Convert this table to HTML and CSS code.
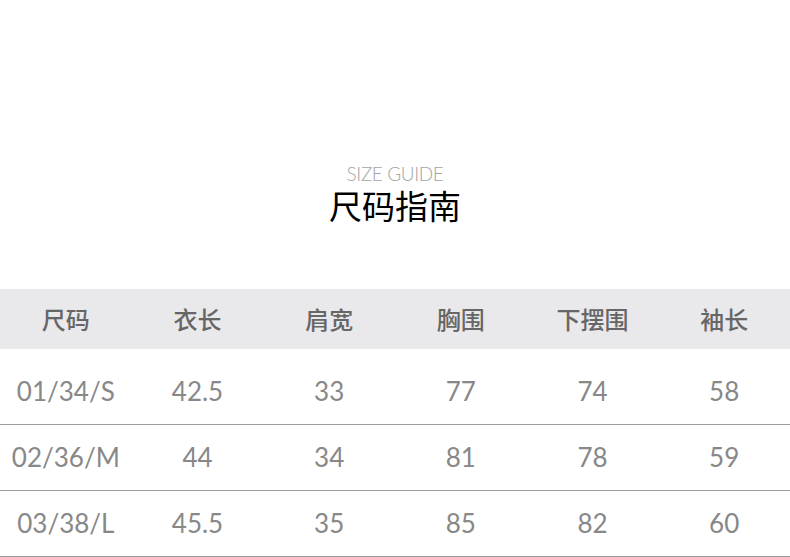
FILE: index.html
```html
<!DOCTYPE html>
<html lang="zh">
<head>
<meta charset="utf-8">
<title>尺码指南</title>
<link rel="stylesheet" href="styles.css">
</head>
<body>
<div class="page">
  <header class="heading">
    <div class="sub">SIZE GUIDE</div>
    <h1 class="title">尺码指南</h1>
  </header>
  <div class="table">
    <div class="row head">
      <div class="cell">尺码</div>
      <div class="cell">衣长</div>
      <div class="cell">肩宽</div>
      <div class="cell">胸围</div>
      <div class="cell">下摆围</div>
      <div class="cell">袖长</div>
    </div>
    <div class="body">
      <div class="row data">
        <div class="cell">01/34/S</div>
        <div class="cell">42.5</div>
        <div class="cell">33</div>
        <div class="cell">77</div>
        <div class="cell">74</div>
        <div class="cell">58</div>
      </div>
      <div class="row data">
        <div class="cell">02/36/M</div>
        <div class="cell">44</div>
        <div class="cell">34</div>
        <div class="cell">81</div>
        <div class="cell">78</div>
        <div class="cell">59</div>
      </div>
      <div class="row data">
        <div class="cell">03/38/L</div>
        <div class="cell">45.5</div>
        <div class="cell">35</div>
        <div class="cell">85</div>
        <div class="cell">82</div>
        <div class="cell">60</div>
      </div>
    </div>
  </div>
</div>
</body>
</html>
```
FILE: styles.css
```css
html, body {
  margin: 0;
  padding: 0;
  background: #ffffff;
}
.page {
  width: 790px;
  padding-top: 164px;
  font-family: "Lato", "Noto Sans CJK SC", sans-serif;
}
.heading {
  display: flex;
  flex-direction: column;
  align-items: center;
}
.sub {
  font-size: 19px;
  line-height: 20px;
  color: #a4a4a4;
  font-weight: 300;
  letter-spacing: -0.4px;
}
.title {
  margin: 2px 0 0;
  font-size: 33px;
  line-height: 40px;
  font-weight: 400;
  color: #000;
  font-family: "Lato", "Noto Sans CJK SC", sans-serif;
}
.table {
  margin-top: 63px;
}
.row {
  display: grid;
  grid-template-columns: repeat(6, 1fr);
}
.cell {
  display: flex;
  align-items: center;
  justify-content: center;
}
.head {
  height: 60px;
  background: #e9e8eb;
  color: #666666;
  font-size: 24px;
  font-weight: 500;
  font-family: "Noto Sans CJK SC", sans-serif;
}
.head .cell {
  padding-bottom: 2px;
}
.body {
  padding-top: 10px;
}
.data {
  height: 65px;
  border-bottom: 1px solid #9c9c9c;
  color: #888888;
  font-size: 26px;
}
.data .cell {
  padding-bottom: 2px;
}
```
